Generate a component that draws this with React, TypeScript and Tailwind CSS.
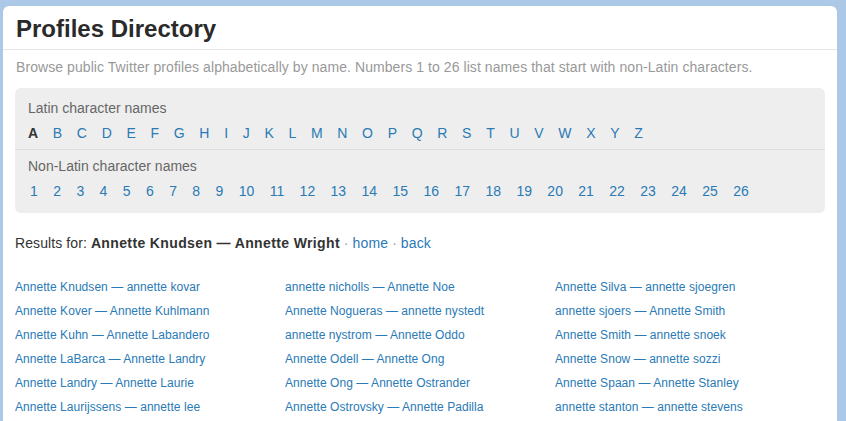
import React from "react";

const letters = "ABCDEFGHIJKLMNOPQRSTUVWXYZ".split("");
const numbers = Array.from({ length: 26 }, (_, i) => String(i + 1));

const cols = [
  [
    "Annette Knudsen — annette kovar",
    "Annette Kover — Annette Kuhlmann",
    "Annette Kuhn — Annette Labandero",
    "Annette LaBarca — Annette Landry",
    "Annette Landry — Annette Laurie",
    "Annette Laurijssens — annette lee",
  ],
  [
    "annette nicholls — Annette Noe",
    "Annette Nogueras — annette nystedt",
    "annette nystrom — Annette Oddo",
    "Annette Odell — Annette Ong",
    "Annette Ong — Annette Ostrander",
    "Annette Ostrovsky — Annette Padilla",
  ],
  [
    "Annette Silva — annette sjoegren",
    "annette sjoers — Annette Smith",
    "Annette Smith — annette snoek",
    "Annette Snow — annette sozzi",
    "Annette Spaan — Annette Stanley",
    "annette stanton — annette stevens",
  ],
];

export default function App() {
  return (
    <div
      className="w-[846px] h-[421px] overflow-hidden bg-[#abc8e6] pl-[3px] pt-[6px]"
      style={{ fontFamily: '"Liberation Sans", Arial, sans-serif' }}
    >
      <div className="w-[834px] h-[440px] bg-white rounded-t-[6px]">
        <div className="h-[44px] border-b border-[#e8e8e8] pl-[13px] pt-[9px]">
          <h1 className="text-[24px] leading-[28px] font-bold text-[#2a2a2a]">Profiles Directory</h1>
        </div>
        <p className="pl-[13px] pt-[9px] text-[14px] leading-[16px] text-[#999] tracking-[0.07px]">
          Browse public Twitter profiles alphabetically by name. Numbers 1 to 26 list names that start with non-Latin characters.
        </p>
        <div className="mx-[12px] mt-[13px] h-[125px] rounded-[6px] bg-[#eeeeee]">
          <div className="h-[62px] border-b border-[#dddddd] pt-[12px] px-[13px]">
            <div className="text-[14px] leading-[16px] text-[#666]">Latin character names</div>
            <div className="mt-[9px] flex gap-[14.7px] text-[14px] leading-[16px]">
              {letters.map((l, i) => (
                <span key={l} className={i === 0 ? "font-bold text-[#333]" : "text-[#2a7ab5]"}>
                  {l}
                </span>
              ))}
            </div>
          </div>
          <div className="pt-[8px] px-[13px]">
            <div className="text-[14px] leading-[16px] text-[#666]">Non-Latin character names</div>
            <div className="mt-[9px] flex gap-[15.4px] text-[14px] leading-[16px] text-[#2a7ab5] pl-[2px]">
              {numbers.map((n) => (
                <span key={n}>{n}</span>
              ))}
            </div>
          </div>
        </div>
        <div className="pl-[12px] pt-[22px] text-[14px] leading-[16px] text-[#333]">
          <span className="tracking-[0.1px]">Results for:</span>{" "}
          <b className="tracking-[0.37px]">Annette Knudsen — Annette Wright</b>{" "}
          <span className="text-[#999]">·</span>{" "}
          <span className="text-[#2a7ab5] tracking-[0.2px]">home</span>{" "}
          <span className="text-[#999]">·</span>{" "}
          <span className="text-[#2a7ab5] tracking-[0.2px]">back</span>
        </div>
        <div className="pl-[12px] pt-[28px] flex">
          {cols.map((c, ci) => (
            <div key={ci} className="w-[270px] flex flex-col">
              {c.map((t) => (
                <div key={t} className="h-[24px] text-[12px] leading-[16px] text-[#2a7ab5] tracking-[0.05px]">
                  {t}
                </div>
              ))}
            </div>
          ))}
        </div>
      </div>
    </div>
  );
}
